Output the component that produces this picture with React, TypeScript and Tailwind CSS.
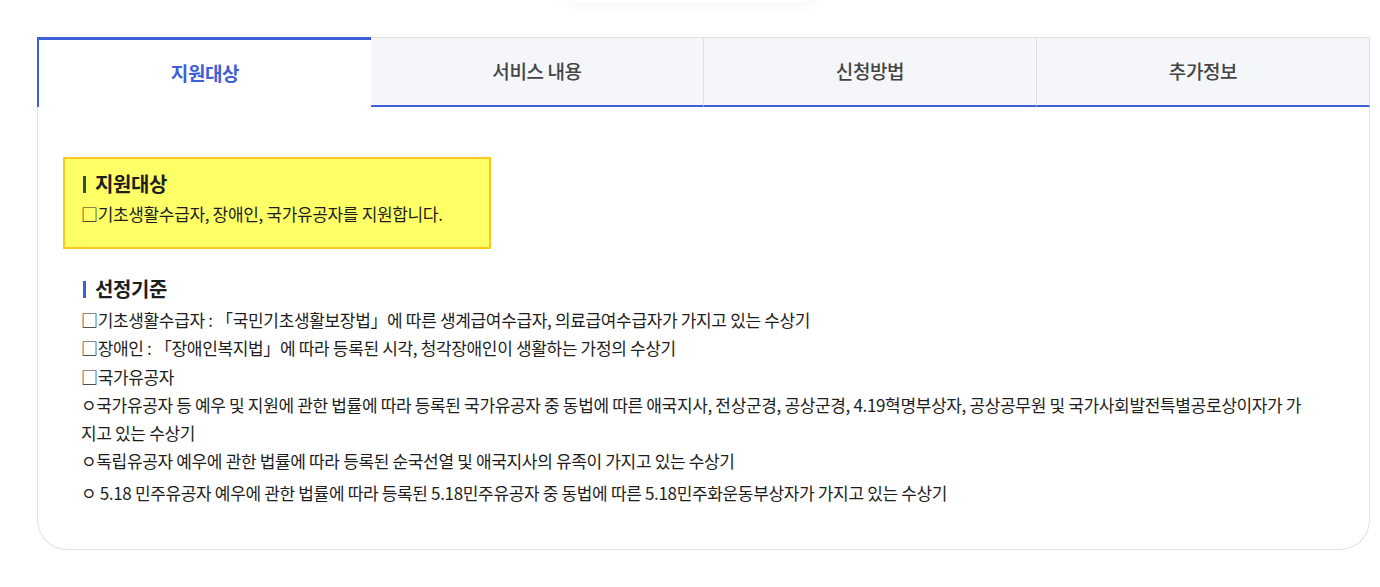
import React from 'react';

const tabs = ['지원대상', '서비스 내용', '신청방법', '추가정보'];

const criteria: { text: string; extra?: string }[] = [
  { text: '□기초생활수급자 : 「국민기초생활보장법」에 따른 생계급여수급자, 의료급여수급자가 가지고 있는 수상기' },
  { text: '□장애인 : 「장애인복지법」에 따라 등록된 시각, 청각장애인이 생활하는 가정의 수상기' },
  { text: '□국가유공자' },
  {
    text: 'ㅇ국가유공자 등 예우 및 지원에 관한 법률에 따라 등록된 국가유공자 중 동법에 따른 애국지사, 전상군경, 공상군경, 4.19혁명부상자, 공상공무원 및 국가사회발전특별공로상이자가 가지고 있는 수상기',
  },
  { text: 'ㅇ독립유공자 예우에 관한 법률에 따라 등록된 순국선열 및 애국지사의 유족이 가지고 있는 수상기' },
  { text: 'ㅇ 5.18 민주유공자 예우에 관한 법률에 따라 등록된 5.18민주유공자 중 동법에 따른 5.18민주화운동부상자가 가지고 있는 수상기', extra: 'mt-[3px]' },
];

const SectionTitle: React.FC<{ title: string; bar: string }> = ({ title, bar }) => (
  <h3 className="flex items-center gap-[9px] text-[20px] font-bold leading-[24px] tracking-[-0.02em] text-[#1e1e1e]">
    <span className={`w-[3px] h-[17px] ${bar}`} />
    {title}
  </h3>
);

export default function App() {
  return (
    <div
      className="min-h-screen bg-white overflow-hidden"
      style={{ fontFamily: '"Noto Sans CJK KR", "Noto Sans", sans-serif' }}
    >
      <div className="mx-auto w-[260px] h-[40px] -mt-[38px] rounded-full bg-white shadow-[0_3px_14px_rgba(40,50,90,0.05)]" />

      <div className="ml-[37px] mr-[10px] mt-[35px]">
        <div className="flex h-[70px]">
          {tabs.map((t, i) =>
            i === 0 ? (
              <div
                key={t}
                className="flex-1 flex items-center justify-center border-t-[3px] border-l-2 border-[#3d5fd9] bg-white text-[19px] font-bold tracking-[-0.02em] text-[#3d5fd9]"
              >
                {t}
              </div>
            ) : (
              <div
                key={t}
                className="flex-1 flex items-center justify-center border-t border-r border-[#dedfe3] border-b-2 border-b-[#3d5fd9] bg-[#f5f6fa] text-[19px] font-medium tracking-[-0.02em] text-[#444]"
              >
                {t}
              </div>
            )
          )}
        </div>

        <div className="border-l border-r border-b border-[#e2e2e2] rounded-b-[30px] px-[25px] pt-[50px] pb-[42px]">
          <div className="w-[428px] bg-[#ffff66] border-2 border-[#f7c81e] pl-[18px] pt-[13px] pb-[19px] text-[#1e1e1e]">
            <SectionTitle title="지원대상" bar="bg-[#2f4f3f]" />
            <p className="mt-[4px] -ml-[2px] text-[17px] leading-[28px] tracking-[-0.02em]">□기초생활수급자, 장애인, 국가유공자를 지원합니다.</p>
          </div>

          <div className="mt-[28px] pl-[20px] pr-[30px] text-[#1e1e1e]">
            <SectionTitle title="선정기준" bar="bg-[#3d5fd9]" />
            <div className="mt-[5px] -ml-[2px] text-[17px] leading-[28.3px] tracking-[-0.02em]">
              {criteria.map((c, i) => (
                <p key={i} className={c.extra}>
                  {c.text}
                </p>
              ))}
            </div>
          </div>
        </div>
      </div>
    </div>
  );
}
